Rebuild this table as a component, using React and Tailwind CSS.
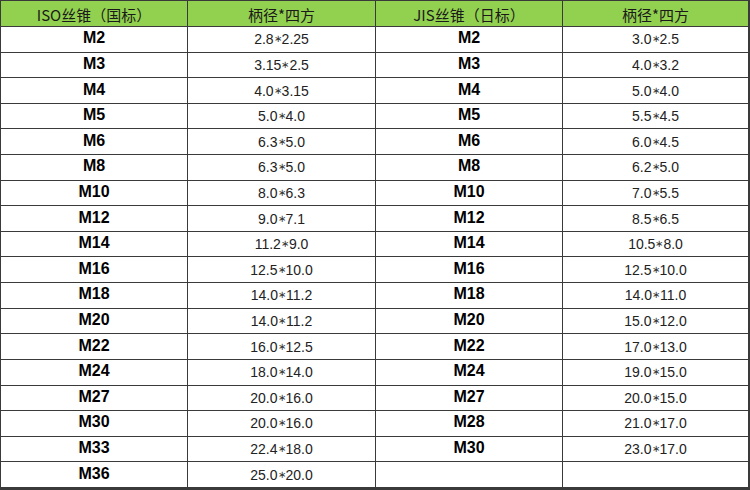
import React from "react";

const left = [
  ["M2", "2.8", "2.25"],
  ["M3", "3.15", "2.5"],
  ["M4", "4.0", "3.15"],
  ["M5", "5.0", "4.0"],
  ["M6", "6.3", "5.0"],
  ["M8", "6.3", "5.0"],
  ["M10", "8.0", "6.3"],
  ["M12", "9.0", "7.1"],
  ["M14", "11.2", "9.0"],
  ["M16", "12.5", "10.0"],
  ["M18", "14.0", "11.2"],
  ["M20", "14.0", "11.2"],
  ["M22", "16.0", "12.5"],
  ["M24", "18.0", "14.0"],
  ["M27", "20.0", "16.0"],
  ["M30", "20.0", "16.0"],
  ["M33", "22.4", "18.0"],
  ["M36", "25.0", "20.0"],
];

const right = [
  ["M2", "3.0", "2.5"],
  ["M3", "4.0", "3.2"],
  ["M4", "5.0", "4.0"],
  ["M5", "5.5", "4.5"],
  ["M6", "6.0", "4.5"],
  ["M8", "6.2", "5.0"],
  ["M10", "7.0", "5.5"],
  ["M12", "8.5", "6.5"],
  ["M14", "10.5", "8.0"],
  ["M16", "12.5", "10.0"],
  ["M18", "14.0", "11.0"],
  ["M20", "15.0", "12.0"],
  ["M22", "17.0", "13.0"],
  ["M24", "19.0", "15.0"],
  ["M27", "20.0", "15.0"],
  ["M28", "21.0", "17.0"],
  ["M30", "23.0", "17.0"],
  ["", "", ""],
];

const cjk = { fontFamily: '"Noto Sans CJK SC", "Noto Sans", sans-serif' };

function Head({ children }) {
  return (
    <div
      className="flex items-center justify-center bg-[#92d050] border-r border-b border-[#3a3a3a] text-[15px] text-[#1a1a1a] leading-none pt-[1px]"
      style={cjk}
    >
      {children}
    </div>
  );
}

function Size({ children }) {
  return (
    <div className="flex items-center justify-center pb-[2px] border-r border-b border-[#3a3a3a] font-['Liberation_Sans',Arial,sans-serif] font-bold text-[16px] text-black leading-none">
      {children}
    </div>
  );
}

function Val({ a, b }) {
  return (
    <div className="flex items-center justify-center border-r border-b border-[#3a3a3a] font-['Liberation_Sans',Arial,sans-serif] text-[14px] text-[#222] leading-none">
      {a ? (
        <span>
          {a}
          <span className="inline-block -translate-y-[2px] text-[10px] text-[#333]">∗</span>
          {b}
        </span>
      ) : null}
    </div>
  );
}

export default function App() {
  const rows = left.map((l, i) => [l, right[i]]);
  return (
    <div className="w-[750px] h-[490px] bg-white">
      <div className="grid grid-cols-[187px_188px_187px_186px] grid-rows-[26px_repeat(18,1fr)] w-[750px] h-[490px] border-l border-t border-r-2 border-b-2 border-[#3a3a3a]">
        <Head>ISO丝锥（国标）</Head>
        <Head>柄径*四方</Head>
        <Head>JIS丝锥（日标）</Head>
        <Head>柄径*四方</Head>
        {rows.map(([l, r], i) => (
          <React.Fragment key={i}>
            <Size>{l[0]}</Size>
            <Val a={l[1]} b={l[2]} />
            <Size>{r[0]}</Size>
            <Val a={r[1]} b={r[2]} />
          </React.Fragment>
        ))}
      </div>
    </div>
  );
}
